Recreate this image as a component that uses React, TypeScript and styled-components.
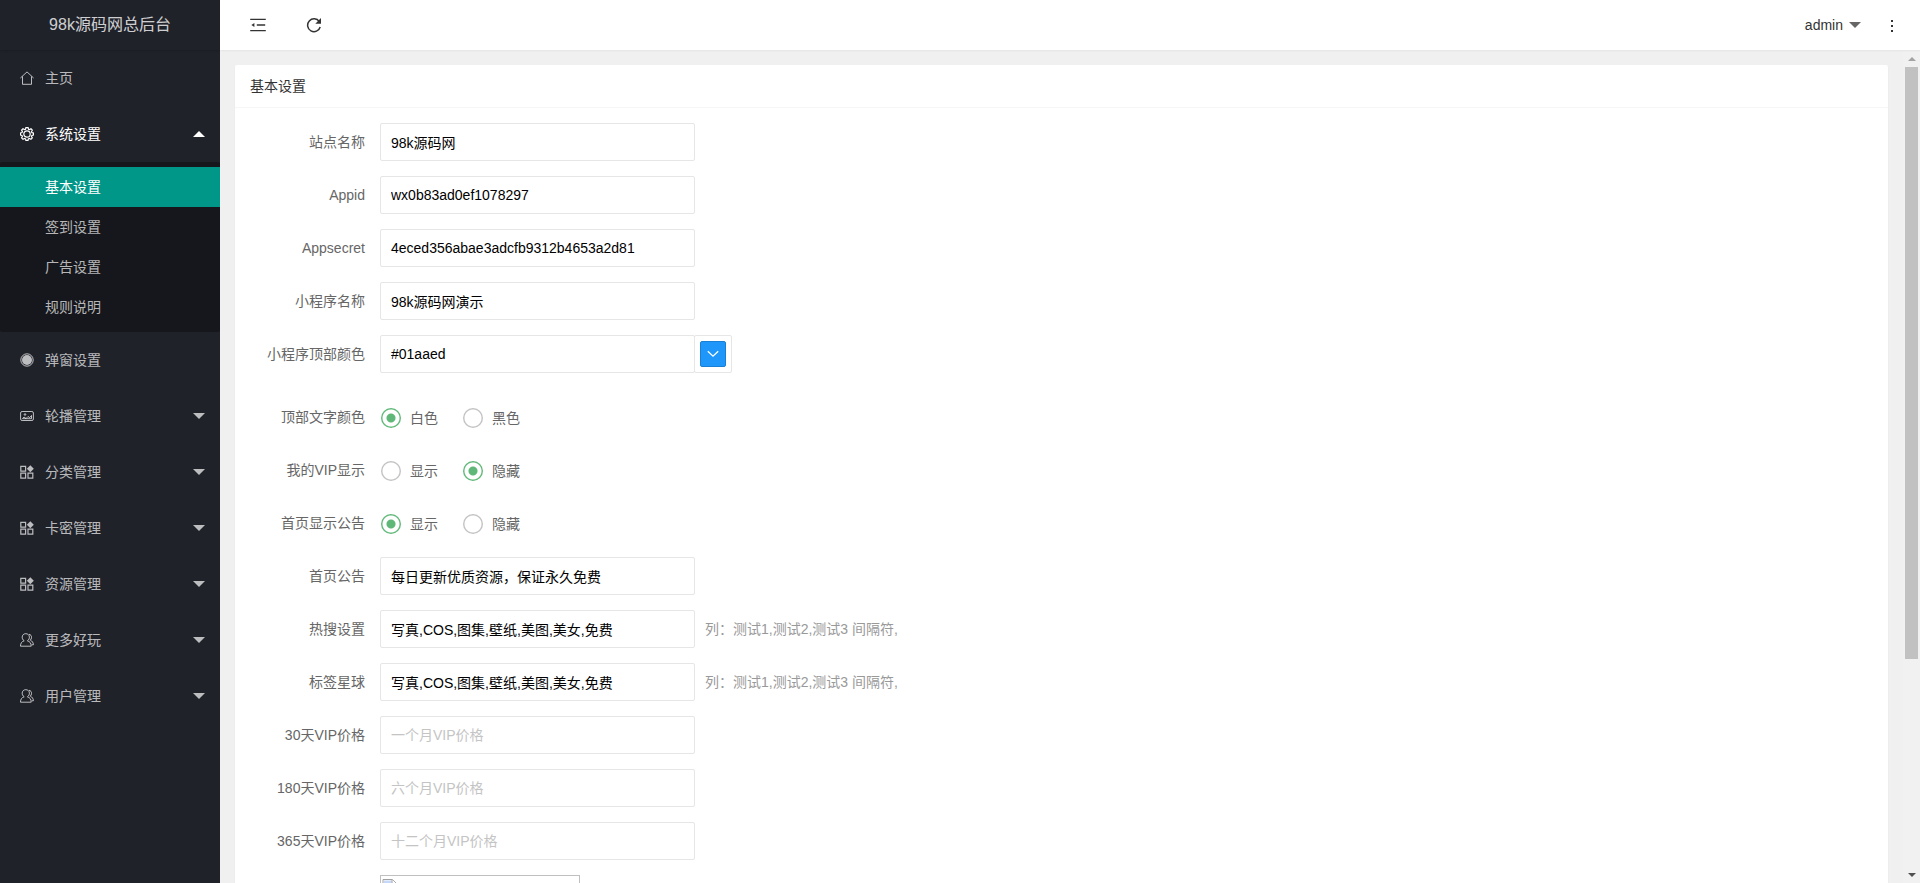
import React, { useState } from "react";
import styled, { createGlobalStyle, css } from "styled-components";

const GlobalStyle = createGlobalStyle`
  * { box-sizing: border-box; }
  body {
    margin: 0;
    background: #f0f0f0;
    color: #333;
    font: 14px/24px "Liberation Sans", "Noto Sans CJK SC", sans-serif;
  }
  button, input { font: inherit; }
`;

const Layout = styled.div`
  display: flex;
  height: 100vh;
  overflow: hidden;
`;

const Sidebar = styled.aside`
  flex: none;
  width: 220px;
  background: #20222a;
  color: rgba(255, 255, 255, 0.7);
  overflow: hidden;
`;

const Logo = styled.div`
  height: 50px;
  line-height: 50px;
  text-align: center;
  font-size: 16px;
  color: rgba(255, 255, 255, 0.8);
  box-shadow: 0 1px 2px 0 rgba(0, 0, 0, 0.15);
`;

const MenuItem = styled.a<{ $open?: boolean }>`
  display: flex;
  align-items: center;
  gap: 11px;
  height: 56px;
  padding: 0 15px 0 20px;
  color: ${(p) => (p.$open ? "#fff" : "rgba(255, 255, 255, 0.7)")};
  text-decoration: none;
`;

const MenuText = styled.span`
  flex: 1;
`;

const Caret = styled.span<{ $up?: boolean }>`
  width: 12px;
  height: 6px;
  background: currentColor;
  clip-path: ${(p) =>
    p.$up ? "polygon(50% 0, 100% 100%, 0 100%)" : "polygon(0 0, 100% 0, 50% 100%)"};
`;

const SubMenu = styled.div`
  padding: 5px 0;
  border-radius: 2px;
  background: #16171c;
`;

const SubItem = styled.a<{ $active?: boolean }>`
  display: block;
  height: 40px;
  padding-left: 45px;
  line-height: 40px;
  text-decoration: none;
  color: ${(p) => (p.$active ? "#fff" : "rgba(255, 255, 255, 0.7)")};
  background: ${(p) => (p.$active ? "#009688" : "transparent")};
`;

const Main = styled.div`
  flex: 1;
  min-width: 0;
  display: flex;
  flex-direction: column;
`;

const Header = styled.header`
  flex: none;
  z-index: 1;
  display: flex;
  align-items: center;
  height: 50px;
  padding: 0 22px 0 30px;
  background: #fff;
  box-shadow: 0 1px 2px 0 rgba(0, 0, 0, 0.05);
`;

const HeaderButton = styled.button`
  display: flex;
  align-items: center;
  gap: 6px;
  padding: 0;
  border: 0;
  background: none;
  color: #333;
  cursor: pointer;
`;

const HeaderTools = styled.div`
  flex: 1;
  display: flex;
  gap: 40px;
`;

const UserTools = styled.div`
  display: flex;
  align-items: center;
  gap: 25px;
  ${Caret} {
    color: #666;
  }
`;

const Body = styled.div`
  flex: 1;
  min-height: 0;
  display: flex;
  padding-top: 1px;
`;

const Content = styled.main`
  flex: 1;
  min-width: 0;
  padding: 14px 15px 15px;
  overflow-y: auto;
  scrollbar-width: none;
`;

const ScrollTrack = styled.div`
  flex: none;
  display: flex;
  flex-direction: column;
  align-items: center;
  width: 17px;
  background: #f1f1f1;
`;

const ScrollEnd = styled.div<{ $down?: boolean }>`
  display: flex;
  align-items: center;
  justify-content: center;
  height: 16px;
  color: ${(p) => (p.$down ? "#505050" : "#a3a3a3")};
  svg {
    display: block;
  }
`;

const ScrollRail = styled.div`
  flex: 1;
  width: 13px;
`;

const ScrollThumb = styled.div`
  height: 74%;
  background: #c1c1c1;
`;

const Card = styled.section`
  border-radius: 2px;
  background: #fff;
  box-shadow: 0 1px 2px 0 rgba(0, 0, 0, 0.05);
`;

const CardTitle = styled.h1`
  margin: 0;
  height: 43px;
  padding: 0 15px;
  border-bottom: 1px solid #f6f6f6;
  font-size: 14px;
  font-weight: 400;
  line-height: 42px;
`;

const Form = styled.form`
  display: flex;
  flex-direction: column;
  gap: 15px;
  padding: 15px 15px 60px;
`;

const labelStyle = css`
  flex: none;
  width: 130px;
  padding-right: 15px;
  line-height: 38px;
  text-align: right;
  color: #666;
`;

const Label = styled.label`
  ${labelStyle}
`;

const GroupLabel = styled.span`
  ${labelStyle}
`;

const Row = styled.div<{ $spaced?: boolean }>`
  display: flex;
  min-height: 38px;
  margin-bottom: ${(p) => (p.$spaced ? "10px" : "0")};
`;

const TextInput = styled.input`
  width: 315px;
  height: 38px;
  padding: 0 0 0 10px;
  border: 1px solid #e6e6e6;
  border-radius: 2px;
  background: #fff;
  color: #000;
  outline: none;
  &::placeholder {
    color: #c4c4c4;
    opacity: 1;
  }
`;

const Hint = styled.span`
  margin-left: 10px;
  line-height: 38px;
  color: #999;
`;

const ColorBox = styled.span`
  display: flex;
  align-items: center;
  justify-content: center;
  width: 38px;
  height: 38px;
  margin-left: -1px;
  border: 1px solid #e6e6e6;
  border-radius: 2px;
`;

const ColorButton = styled.button`
  display: flex;
  align-items: center;
  justify-content: center;
  width: 26px;
  height: 26px;
  padding: 0;
  border: 1px solid #1a80d6;
  border-radius: 2px;
  background: #1e96fa;
  color: #fff;
  cursor: pointer;
`;

const RadioGroup = styled.div`
  display: flex;
  align-items: center;
  gap: 25px;
  padding: 2px 0 0 1px;
`;

const RadioLabel = styled.label`
  display: flex;
  align-items: center;
  gap: 9px;
  color: #666;
  cursor: pointer;
`;

const Radio = styled.input`
  appearance: none;
  width: 20px;
  height: 20px;
  margin: 0;
  border-radius: 50%;
  background: radial-gradient(circle, transparent 8px, #c2c2c2 9px);
  &:checked {
    background: radial-gradient(circle, #5fb878 4px, transparent 5px, transparent 8px, #5fb878 9px);
  }
`;

const Preview = styled.div`
  width: 200px;
  height: 200px;
  padding: 1px;
  border: 1px solid #c0c0c0;
`;

const HomeIcon = () => (
  <svg width="14" height="14" viewBox="0 0 14 14" fill="none" stroke="currentColor">
    <path d="M.4 7 7 .9 13.600 7M2.500 5.500v7.800h9V5.500" />
  </svg>
);

const GearIcon = () => (
  <svg width="14" height="14" viewBox="0 0 14 14" fill="none" stroke="currentColor" strokeWidth="1.200">
    <path d="M5.900.6h2.200l.4 1.600 1 .4 1.500-.8 1.300 1.400-.8 1.500.4 1 1.500.3v2l-1.500.4-.4 1 .8 1.500-1.400 1.400-1.500-.8-1 .4-.4 1.500H5.900l-.4-1.500-1-.4-1.500.8-1.400-1.400.8-1.500-.4-1L.5 8V6l1.500-.4.4-1-.8-1.500 1.400-1.300 1.500.8 1-.4z" />
    <circle cx="7" cy="7" r="3.200" />
  </svg>
);

const DotIcon = () => (
  <svg width="14" height="14" viewBox="0 0 14 14">
    <circle cx="7" cy="7" r="5" fill="currentColor" />
    <circle cx="7" cy="7" r="6.200" fill="none" stroke="currentColor" />
  </svg>
);

const PictureIcon = () => (
  <svg width="14" height="14" viewBox="0 0 14 14" fill="none" stroke="currentColor">
    <rect x=".6" y="2.500" width="12.800" height="9" rx="1.500" />
    <path d="M2.500 9.700h9V6.500L9.700 8.600 8 7.500 6 9.500 4 8z" />
    <circle cx="5" cy="5.500" r=".8" />
  </svg>
);

const AppIcon = () => (
  <svg width="14" height="14" viewBox="0 0 14 14" fill="none" stroke="currentColor" strokeWidth="1.200">
    <path d="M.8 1.300h4.800v4.900H.8zM.8 8.200h4.800v4.900H.8zM8 8.200h4.800v4.900H8z" />
    <path d="m10.300.2 3.500 3.500-3.500 3.500-3.500-3.500z" fill="currentColor" stroke="none" />
  </svg>
);

const UsersIcon = () => (
  <svg width="14" height="14" viewBox="0 0 14 14" fill="none" stroke="currentColor">
    <path d="M4.200 7.800C2.700 6.800 2.200 5.600 2.200 4.200 2.200 2 3.700.7 5.800.7S9.400 2 9.400 4.200c0 1.400-.6 2.600-2 3.600 2.400.7 3.800 2.300 3.800 5.400H.5c0-3 1.200-4.700 3.700-5.400z" />
    <path d="M9 1.300c1.800.3 2.700 1.600 2.500 3.300-.1 1-.5 1.900-1.200 2.600 1.900.8 3 2.300 3.100 4.600h-1.600" />
  </svg>
);

const ShrinkIcon = () => (
  <svg width="16" height="16" viewBox="0 0 16 16" fill="none" stroke="currentColor" strokeWidth="1.400">
    <path d="M.2 2.400h15.600M6.800 8h8.400M.2 13.600h15.600" />
    <path d="M4.400 6v4L1.400 8z" fill="currentColor" stroke="none" />
  </svg>
);

const RefreshIcon = () => (
  <svg width="16" height="16" viewBox="0 0 16 16" fill="none" stroke="currentColor" strokeWidth="1.500">
    <path d="M13.300 4.600A6.400 6.400 0 1 0 14.200 10" />
    <path d="M15 1v5.700H9.300z" fill="currentColor" stroke="none" />
  </svg>
);

const MoreIcon = () => (
  <svg width="12" height="16" viewBox="0 0 12 16" fill="currentColor">
    <path d="M5 3h2v2H5zM5 8h2v2H5zM5 13h2v2H5z" />
  </svg>
);

const ChevronIcon = () => (
  <svg width="12" height="8" viewBox="0 0 12 8" fill="none" stroke="currentColor" strokeWidth="1.300">
    <path d="m.8 1.200 5.200 5 5.200-5" />
  </svg>
);

const BrokenImageIcon = () => (
  <svg width="16" height="16" viewBox="0 0 16 16" fill="none">
    <path d="M1 1.500h9.500l4 4v9H1z" fill="#fff" stroke="#a0a0a0" />
    <path d="M2 2.500h7.500v4H14V14H2z" fill="#c5d8f7" />
    <path d="M10 1.500v4.500h4.500" fill="#fff" stroke="#a0a0a0" />
    <path d="M3.500 8c0-1.500 1-2.200 2-2 .5-1.600 2.800-1.400 3 .2.800 0 1 .8 1 1.800z" fill="#fff" />
  </svg>
);

const subItems = ["基本设置", "签到设置", "广告设置", "规则说明"];

const menu = [
  { text: "弹窗设置", Icon: DotIcon, leaf: true },
  { text: "轮播管理", Icon: PictureIcon },
  { text: "分类管理", Icon: AppIcon },
  { text: "卡密管理", Icon: AppIcon },
  { text: "资源管理", Icon: AppIcon },
  { text: "更多好玩", Icon: UsersIcon },
  { text: "用户管理", Icon: UsersIcon },
];

type FieldProps = { id: string; label: string; value?: string; placeholder?: string; hint?: string };

const Field = ({ id, label, value, placeholder, hint }: FieldProps) => (
  <Row>
    <Label htmlFor={id}>{label}</Label>
    <TextInput id={id} name={id} type="text" defaultValue={value} placeholder={placeholder} />
    {hint && <Hint>{hint}</Hint>}
  </Row>
);

type ChoiceProps = { name: string; label: string; options: string[]; initial: string };

const Choice = ({ name, label, options, initial }: ChoiceProps) => {
  const [value, setValue] = useState(initial);
  return (
    <Row role="radiogroup" aria-labelledby={`${name}-label`}>
      <GroupLabel id={`${name}-label`}>{label}</GroupLabel>
      <RadioGroup>
        {options.map((option) => (
          <RadioLabel key={option}>
            <Radio type="radio" name={name} checked={value === option} onChange={() => setValue(option)} />
            {option}
          </RadioLabel>
        ))}
      </RadioGroup>
    </Row>
  );
};

const keywords = "写真,COS,图集,壁纸,美图,美女,免费";
const keywordHint = "列：测试1,测试2,测试3 间隔符,";

export default function App() {
  return (
    <>
      <GlobalStyle />
      <Layout>
        <Sidebar>
          <Logo>98k源码网总后台</Logo>
          <nav>
            <MenuItem href="#home">
              <HomeIcon />
              <MenuText>主页</MenuText>
            </MenuItem>
            <MenuItem href="#system" $open>
              <GearIcon />
              <MenuText>系统设置</MenuText>
              <Caret $up />
            </MenuItem>
            <SubMenu>
              {subItems.map((text, i) => (
                <SubItem key={text} href="#system" $active={i === 0}>
                  {text}
                </SubItem>
              ))}
            </SubMenu>
            {menu.map(({ text, Icon, leaf }) => (
              <MenuItem key={text} href="#menu">
                <Icon />
                <MenuText>{text}</MenuText>
                {!leaf && <Caret />}
              </MenuItem>
            ))}
          </nav>
        </Sidebar>
        <Main>
          <Header>
            <HeaderTools>
              <HeaderButton type="button" aria-label="侧边伸缩">
                <ShrinkIcon />
              </HeaderButton>
              <HeaderButton type="button" aria-label="刷新">
                <RefreshIcon />
              </HeaderButton>
            </HeaderTools>
            <UserTools>
              <HeaderButton type="button">
                admin
                <Caret />
              </HeaderButton>
              <HeaderButton type="button" aria-label="更多">
                <MoreIcon />
              </HeaderButton>
            </UserTools>
          </Header>
          <Body>
            <Content>
              <Card>
                <CardTitle>基本设置</CardTitle>
                <Form>
                  <Field id="site" label="站点名称" value="98k源码网" />
                  <Field id="appid" label="Appid" value="wx0b83ad0ef1078297" />
                  <Field id="appsecret" label="Appsecret" value="4eced356abae3adcfb9312b4653a2d81" />
                  <Field id="appname" label="小程序名称" value="98k源码网演示" />
                  <Row $spaced>
                    <Label htmlFor="color">小程序顶部颜色</Label>
                    <TextInput id="color" name="color" type="text" defaultValue="#01aaed" />
                    <ColorBox>
                      <ColorButton type="button" aria-label="选择颜色">
                        <ChevronIcon />
                      </ColorButton>
                    </ColorBox>
                  </Row>
                  <Choice name="textcolor" label="顶部文字颜色" options={["白色", "黑色"]} initial="白色" />
                  <Choice name="vip" label="我的VIP显示" options={["显示", "隐藏"]} initial="隐藏" />
                  <Choice name="notice" label="首页显示公告" options={["显示", "隐藏"]} initial="显示" />
                  <Field id="noticetext" label="首页公告" value="每日更新优质资源，保证永久免费" />
                  <Field id="hot" label="热搜设置" value={keywords} hint={keywordHint} />
                  <Field id="tags" label="标签星球" value={keywords} hint={keywordHint} />
                  <Field id="vip30" label="30天VIP价格" placeholder="一个月VIP价格" />
                  <Field id="vip180" label="180天VIP价格" placeholder="六个月VIP价格" />
                  <Field id="vip365" label="365天VIP价格" placeholder="十二个月VIP价格" />
                  <Row>
                    <GroupLabel />
                    <Preview>
                      <BrokenImageIcon />
                    </Preview>
                  </Row>
                </Form>
              </Card>
            </Content>
            <ScrollTrack aria-hidden="true">
              <ScrollEnd>
                <svg width="8" height="4" viewBox="0 0 8 4" fill="currentColor">
                  <path d="M4 0l4 4H0z" />
                </svg>
              </ScrollEnd>
              <ScrollRail>
                <ScrollThumb />
              </ScrollRail>
              <ScrollEnd $down>
                <svg width="8" height="4" viewBox="0 0 8 4" fill="currentColor">
                  <path d="M0 0h8L4 4z" />
                </svg>
              </ScrollEnd>
            </ScrollTrack>
          </Body>
        </Main>
      </Layout>
    </>
  );
}
